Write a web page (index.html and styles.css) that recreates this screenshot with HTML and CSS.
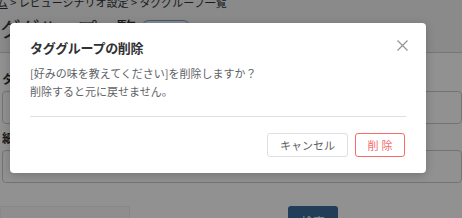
FILE: index.html
```html
<!DOCTYPE html>
<html lang="ja">
<head>
<meta charset="utf-8">
<link rel="stylesheet" href="styles.css">
</head>
<body>
<div class="page">
  <div class="breadcrumb"><a class="crumb-link">ホーム</a> &gt; レビューシナリオ設定 &gt; タググループ一覧</div>
  <div class="title-row">
    <h1 class="page-title">タググループ一覧</h1>
    <span class="help-badge"><span class="help-icon">?</span>説明</span>
  </div>
  <div class="card">
    <label class="field-label">タググループ名</label>
    <div class="field-input"></div>
    <label class="field-label">細目</label>
    <div class="field-input"></div>
    <div class="actions-row">
      <div class="note-box">検索条件を入力してください</div>
      <button class="search-btn">検索</button>
    </div>
  </div>
</div>

<div class="overlay"></div>
<div class="dialog" role="dialog">
  <div class="dialog-header">
    <span class="dialog-title">タググループの削除</span>
    <svg class="dialog-close" width="11" height="11" viewBox="0 0 11 11"><path d="M0.5 0.5 L10.5 10.5 M10.5 0.5 L0.5 10.5" stroke="#909399" stroke-width="1.2" fill="none"/></svg>
  </div>
  <div class="dialog-body">
    <p>[好みの味を教えてください]を削除しますか？</p>
    <p>削除すると元に戻せません。</p>
  </div>
  <div class="dialog-footer">
    <button class="btn btn-cancel">キャンセル</button>
    <button class="btn btn-danger">削除</button>
  </div>
</div>
</body>
</html>
```

FILE: styles.css
```css
* { box-sizing: border-box; }
html, body { margin: 0; padding: 0; }
body {
  width: 462px;
  height: 218px;
  overflow: hidden;
  background: #f2f2f2;
  font-family: "Noto Sans CJK JP", "Noto Sans", sans-serif;
  color: #303133;
  position: relative;
}
.page { padding: 0; }
.breadcrumb {
  font-size: 11px;
  line-height: 14px;
  margin-top: -5px;
  margin-left: -25px;
  color: #303133;
  white-space: nowrap;
}
.crumb-link { text-decoration: underline; color: #303133; }
.title-row {
  display: flex;
  align-items: center;
  gap: 6px;
  margin-top: 3px;
  margin-left: -19px;
  height: 32px;
}
.page-title {
  margin: 0;
  font-size: 20px;
  font-weight: 400;
  letter-spacing: -0.5px;
  color: #303133;
}
.help-badge {
  display: inline-flex;
  align-items: center;
  gap: 4px;
  height: 16px;
  width: 50px;
  padding: 0 8px 0 4px;
  border: 1px solid #7a9cc6;
  border-radius: 9px;
  font-size: 8px;
  color: #2c4a6c;
  background: #eef3f9;
}
.help-icon {
  width: 11px; height: 11px;
  border-radius: 50%;
  background: #2c4a6c;
  color: #fff;
  font-size: 8px;
  font-weight: 700;
  display: inline-flex;
  align-items: center;
  justify-content: center;
}
.card {
  margin-top: 8px;
  border-top: 1px solid #d0d0d0;
  background: #fff;
  padding: 18px 0 0 2px;
}
.field-label {
  display: block;
  font-size: 12px;
  font-weight: 700;
  line-height: 16px;
  color: #303133;
  margin-bottom: 4px;
}
.field-input {
  height: 33px;
  border: 1px solid #c8cbd2;
  border-radius: 4px;
  background: #fff;
  margin-bottom: 6px;
}
.actions-row {
  display: flex;
  align-items: flex-start;
  margin-top: 23px;
}
.note-box {
  width: 130px;
  height: 30px;
  margin-left: -2px;
  background: #fafafa;
  border: 1px solid #f0f0f0;
  font-size: 10px;
  color: #606266;
  padding: 8px 0 0 30px;
  white-space: nowrap;
  overflow: hidden;
}
.search-btn {
  margin-left: 158px;
  width: 50px;
  height: 30px;
  border: none;
  border-radius: 3px;
  background: #3b6b9c;
  color: #fff;
  font-family: inherit;
  font-size: 12px;
}
.overlay {
  position: absolute;
  inset: 0;
  background: rgba(0, 0, 0, 0.43);
}
.dialog {
  position: absolute;
  left: 10px;
  top: 23px;
  width: 416px;
  background: #fff;
  border-radius: 4px;
  box-shadow: 0 2px 10px rgba(0, 0, 0, 0.2);
  padding: 15px 20px 16px;
}
.dialog-header {
  display: flex;
  justify-content: space-between;
  align-items: flex-start;
  height: 20px;
}
.dialog-title {
  font-size: 13px;
  font-weight: 700;
  line-height: 20px;
  letter-spacing: -0.3px;
  color: #303133;
}
.dialog-close { margin-top: 2px; margin-right: -2px; }
.dialog-body {
  margin-top: 6px;
  padding-bottom: 16px;
  border-bottom: 1px solid #dcdfe6;
  font-size: 11px;
  line-height: 18px;
  color: #606266;
}
.dialog-body p { margin: 0; }
.dialog-footer {
  display: flex;
  justify-content: flex-end;
  gap: 7px;
  margin-top: 16px;
  padding-right: 1px;
}
.btn {
  height: 24px;
  border-radius: 3px;
  background: #fff;
  font-family: inherit;
  font-size: 11px;
  line-height: 22px;
  padding: 0;
  cursor: pointer;
}
.btn-cancel {
  width: 81px;
  border: 1px solid #dcdfe6;
  color: #606266;
}
.btn-danger {
  width: 50px;
  border: 1px solid #f56c6c;
  color: #f56c6c;
  letter-spacing: 3px;
  padding-left: 3px;
}
```
